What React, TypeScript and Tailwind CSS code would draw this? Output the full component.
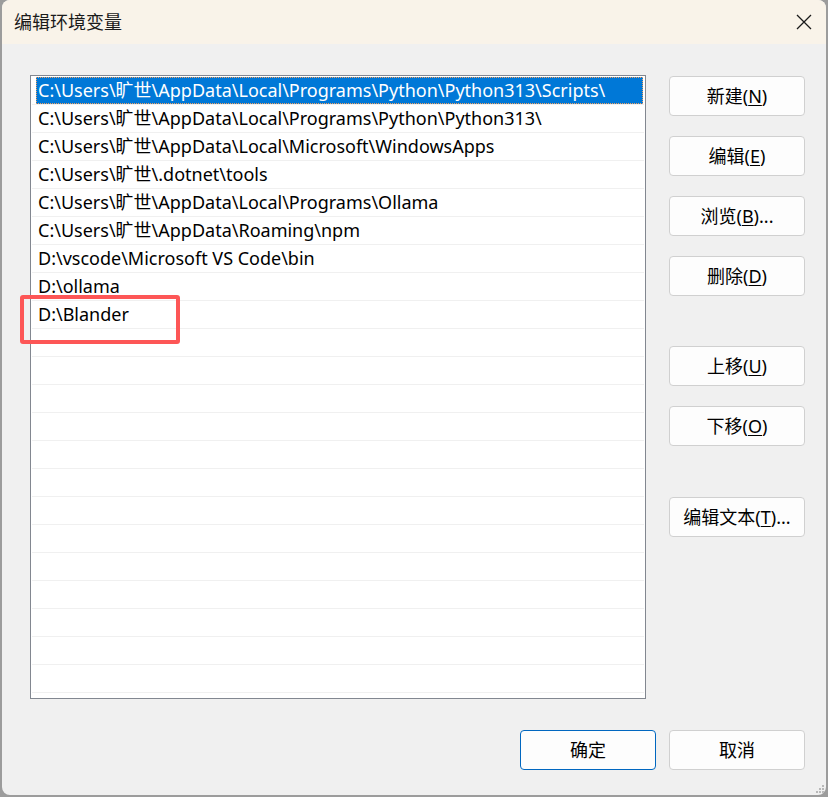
import React from 'react';

const paths = [
  'C:\\Users\\旷世\\AppData\\Local\\Programs\\Python\\Python313\\Scripts\\',
  'C:\\Users\\旷世\\AppData\\Local\\Programs\\Python\\Python313\\',
  'C:\\Users\\旷世\\AppData\\Local\\Microsoft\\WindowsApps',
  'C:\\Users\\旷世\\.dotnet\\tools',
  'C:\\Users\\旷世\\AppData\\Local\\Programs\\Ollama',
  'C:\\Users\\旷世\\AppData\\Roaming\\npm',
  'D:\\vscode\\Microsoft VS Code\\bin',
  'D:\\ollama',
  'D:\\Blander',
];

const rows = Array.from({ length: 22 }, (_, i) => paths[i] ?? '');

const font = { fontFamily: '"Noto Sans", "Noto Sans CJK SC", sans-serif' };

const Btn = ({
  label,
  mn,
  tail = '',
  primary = false,
}: {
  label: string;
  mn?: string;
  tail?: string;
  primary?: boolean;
}) => (
  <button
    className={
      'w-[136px] h-[40px] rounded-[4px] bg-[#fdfdfd] text-[18px] text-black flex items-center justify-center border ' +
      (primary ? 'border-[#0067c0]' : 'border-[#d0d0d0]')
    }
  >
    {label}
    {mn && (
      <>
        (<span className="underline underline-offset-2">{mn}</span>){tail}
      </>
    )}
  </button>
);

export default function App() {
  return (
    <div className="w-[828px] h-[797px] bg-[#9c9c9c] pl-[2px] pr-[2px] pb-[2px]" style={font}>
      <div className="relative w-full h-full bg-[#f0f0f0] rounded-[8px] overflow-hidden flex flex-col">
        {/* title bar */}
        <div className="h-[44px] bg-[#f9f3e9] flex items-center justify-between pl-[12px] pr-[14px] shrink-0">
          <span className="text-[18px] text-[#1a1a1a]">编辑环境变量</span>
          <svg width="16" height="16" viewBox="0 0 16 16" className="text-[#1a1a1a]">
            <path d="M1 1 L15 15 M15 1 L1 15" stroke="currentColor" strokeWidth="1.3" />
          </svg>
        </div>

        <div className="flex pl-[28px] pt-[31px]">
          {/* list */}
          <div className="w-[616px] h-[624px] border border-[#828790] bg-white px-[1px] pt-[1px]">
            {rows.map((p, i) => (
              <div key={i} className="h-[28px] border-b border-[#f0f0f0] flex">
                <div
                  className={
                    'ml-[4px] mr-[1px] pl-[2px] flex-1 h-[27px] leading-[27px] text-[18px] whitespace-nowrap overflow-hidden ' +
                    (i === 0
                      ? 'bg-[#0078d7] text-white outline outline-1 outline-dotted outline-[#f0a060] -outline-offset-1'
                      : 'text-black')
                  }
                >
                  {p}
                </div>
              </div>
            ))}
          </div>

          {/* side buttons */}
          <div className="ml-[23px] pt-[1px] flex flex-col">
            <div className="flex flex-col gap-[20px]">
              <Btn label="新建" mn="N" />
              <Btn label="编辑" mn="E" />
              <Btn label="浏览" mn="B" tail="..." />
              <Btn label="删除" mn="D" />
            </div>
            <div className="mt-[50px] flex flex-col gap-[20px]">
              <Btn label="上移" mn="U" />
              <Btn label="下移" mn="O" />
            </div>
            <div className="mt-[51px]">
              <Btn label="编辑文本" mn="T" tail="..." />
            </div>
          </div>
        </div>

        {/* footer */}
        <div className="flex justify-end gap-[13px] pr-[21px] mt-[31px]">
          <Btn label="确定" primary />
          <Btn label="取消" />
        </div>

        {/* resize grip */}
        <svg width="10" height="10" viewBox="0 0 10 10" className="absolute right-[1px] bottom-[1px]">
          <rect x="7" y="1" width="2" height="2" fill="#b8b8b8" />
          <rect x="4" y="4" width="2" height="2" fill="#b8b8b8" />
          <rect x="7" y="4" width="2" height="2" fill="#b8b8b8" />
          <rect x="1" y="7" width="2" height="2" fill="#b8b8b8" />
          <rect x="4" y="7" width="2" height="2" fill="#b8b8b8" />
          <rect x="7" y="7" width="2" height="2" fill="#b8b8b8" />
        </svg>

        {/* annotation highlight */}
        <div className="absolute left-[18px] top-[295px] w-[160px] h-[49px] border-[4px] border-[#fd5656] rounded-[3px]" />
      </div>
    </div>
  );
}
